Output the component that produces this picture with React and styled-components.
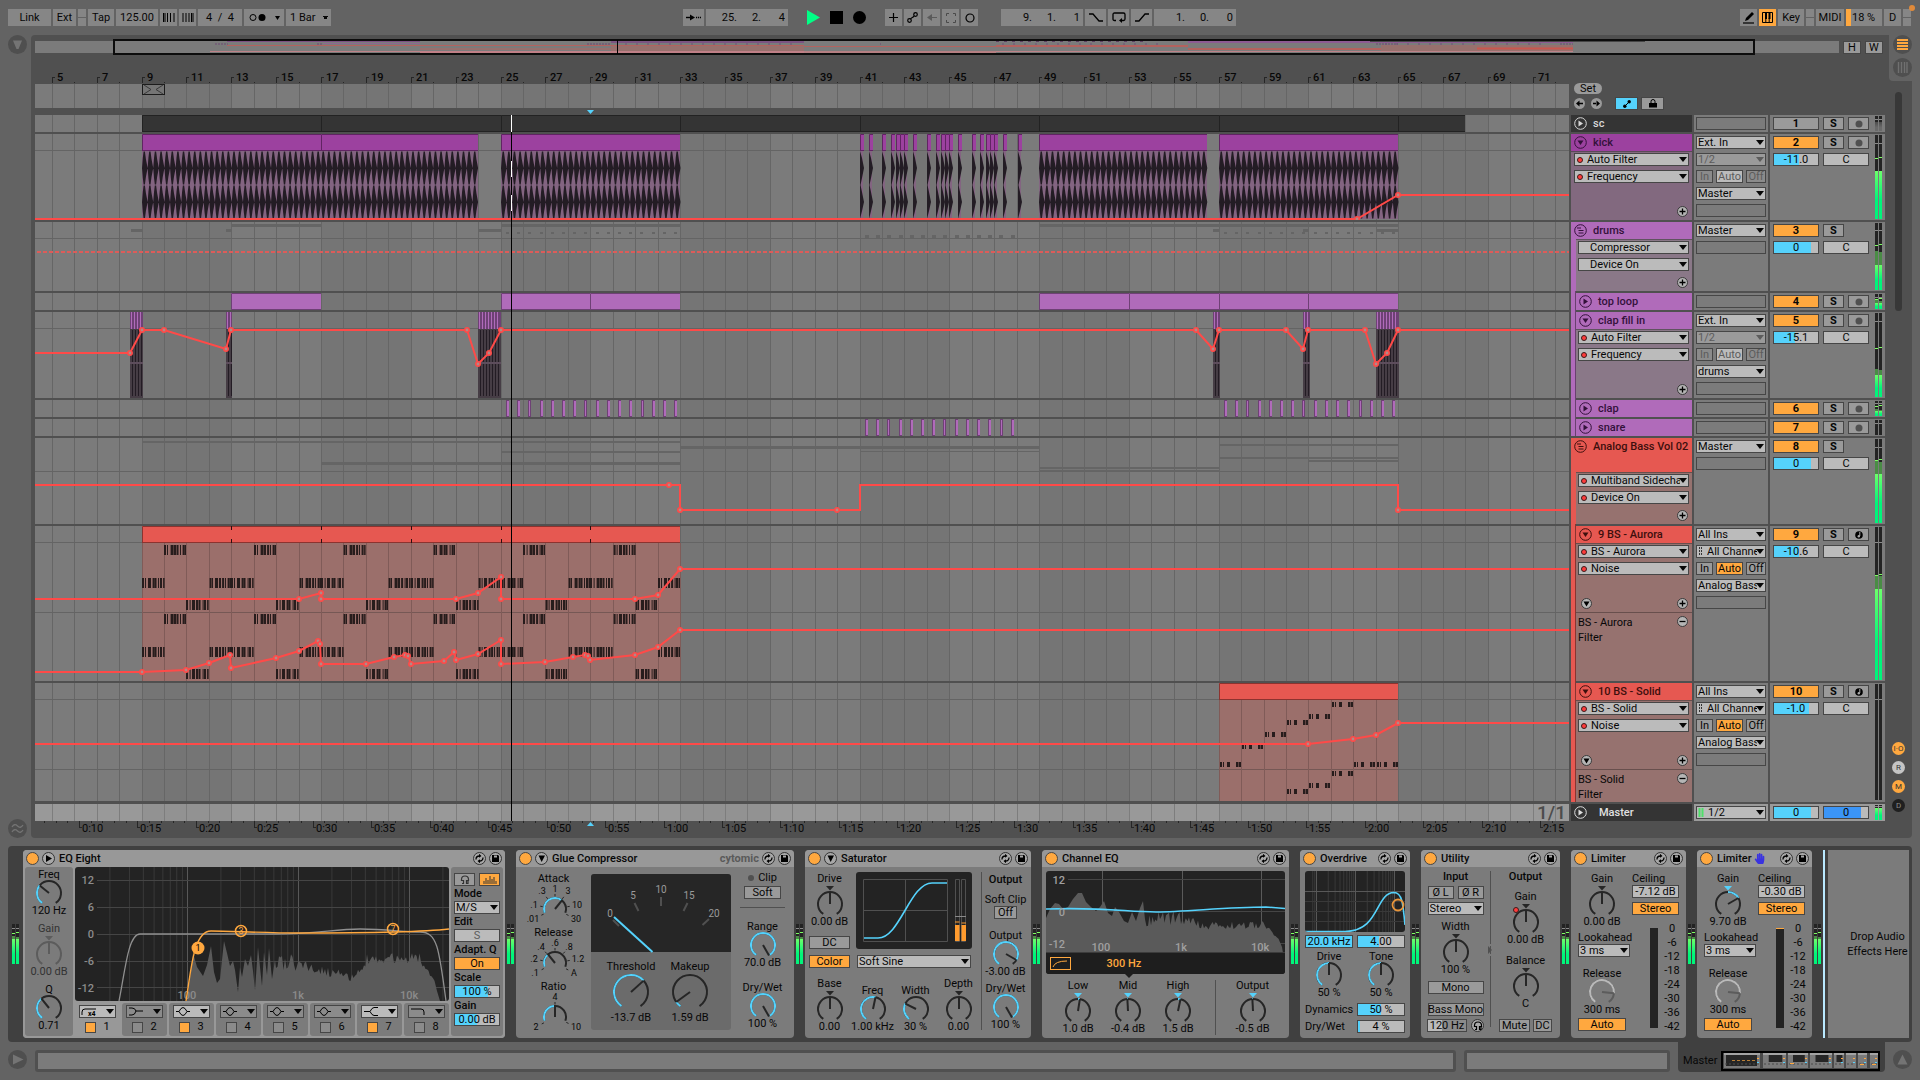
import React from "react";
import styled, { createGlobalStyle, css } from "styled-components";
import { FaHandPaper } from "react-icons/fa";

const GlobalStyle = createGlobalStyle`
  * {
    box-sizing: border-box;
  }
  body {
    margin: 0;
    background: #636363;
    color: #070707;
    font-family: Roboto, "Liberation Sans", sans-serif;
    font-size: 11px;
    line-height: 12px;
  }
  button, input, select {
    font: inherit;
    color: inherit;
    margin: 0;
    padding: 0;
    border-radius: 0;
  }
  svg {
    display: block;
    flex: none;
    overflow: visible;
  }
`;

const orange = "#ffa83f";
const blue = "#55d2fc";
const red = "#ff4a48";
const ink = "#262626";

/* ---------- shared parts ---------- */

const Page = styled.div`
  display: flex;
  flex-direction: column;
  min-height: 100vh;
  background: #636363;
`;

const Btn = styled.button`
  flex: none;
  display: flex;
  align-items: center;
  justify-content: center;
  width: ${(p) => (p.$w ? p.$w + "px" : "auto")};
  height: 13px;
  line-height: 11px;
  border: 1px solid #464646;
  background: ${(p) => p.$bg || "#9a9a9a"};
  color: ${(p) => p.$color || "#070707"};
  font-weight: ${(p) => (p.$bold ? 700 : 400)};
  white-space: nowrap;
`;

const ValueInput = styled.input`
  flex: none;
  width: ${(p) => p.$w}px;
  height: 13px;
  line-height: 11px;
  border: 1px solid #464646;
  text-align: center;
  background: linear-gradient(
    to right,
    ${(p) => p.$color || blue} ${(p) => p.$fill || 0}%,
    ${(p) => p.$base || "#bbbbbb"} ${(p) => p.$fill || 0}%
  );
`;

const SelectWrap = styled.span`
  position: relative;
  flex: none;
  display: flex;
  align-items: center;
  width: ${(p) => (p.$w ? p.$w + "px" : "auto")};
  height: 13px;
  border: 1px solid #464646;
  background: ${(p) => p.$bg || "#bbbbbb"};
  color: ${(p) => (p.$dim ? "#5c5c5c" : "#070707")};
  &::after {
    content: "";
    position: absolute;
    right: 1px;
    top: 3px;
    border: 4px solid transparent;
    border-top: 5px solid currentColor;
    border-bottom: 0;
    pointer-events: none;
  }
  select {
    appearance: none;
    flex: 1;
    min-width: 0;
    height: 11px;
    line-height: 11px;
    padding-left: ${(p) => p.$indent || 1}px;
    padding-right: 8px;
    border: 0;
    background: transparent;
  }
`;

const RedDot = styled.i`
  flex: none;
  width: 6px;
  height: 6px;
  margin: 0 1px 0 2px;
  border-radius: 50%;
  border: 1px solid #3a1a1a;
  background: #ff3b3b;
`;

function Select(props) {
  return (
    <SelectWrap $w={props.w} $bg={props.bg} $dim={props.dim} $indent={props.indent}>
      {props.children}
      <select aria-label={props.label || props.value}>
        <option>{props.value}</option>
      </select>
    </SelectWrap>
  );
}

const Circle = styled.button`
  flex: none;
  display: flex;
  align-items: center;
  justify-content: center;
  width: ${(p) => p.$d}px;
  height: ${(p) => p.$d}px;
  border-radius: 50%;
  border: ${(p) => (p.$line ? "1px solid " + p.$line : 0)};
  background: ${(p) => p.$bg || "transparent"};
  color: ${(p) => p.$color || "#070707"};
`;

const Empty = styled.div`
  width: 70px;
  height: 13px;
  border: 1px solid #464646;
`;

/* ---------- toolbar ---------- */

const ToolbarRow = styled.header`
  position: relative;
  display: grid;
  grid-template-columns: 1fr auto 1fr;
  height: 35px;
  padding: 9px 9px 9px 8px;
`;

const Group = styled.div`
  display: flex;
  align-items: center;
  gap: 2px;
  justify-content: ${(p) => (p.$end ? "flex-end" : "flex-start")};
`;

const ToolBtn = styled.button`
  display: flex;
  align-items: center;
  justify-content: center;
  gap: 6px;
  width: ${(p) => p.$w}px;
  height: 17px;
  border: 0;
  background: ${(p) => p.$bg || "#868686"};
`;

const ToolInput = styled.input`
  width: ${(p) => p.$w}px;
  height: 17px;
  border: 0;
  text-align: center;
  background: #868686;
`;

const Position = styled.div`
  display: flex;
  justify-content: flex-end;
  width: 82px;
  height: 17px;
  padding-right: 3px;
  background: #868686;
  input {
    width: 24px;
    border: 0;
    background: transparent;
    text-align: right;
  }
`;

const Led = styled.span`
  width: 8px;
  height: 17px;
  background: linear-gradient(#868686 8px, #636363 8px, #636363 9px, #868686 9px);
`;

const Gap = styled.span`
  width: ${(p) => p.$w}px;
`;

const ToolSelect = styled.select`
  appearance: none;
  width: 45px;
  height: 17px;
  padding-left: 4px;
  border: 0;
  background: linear-gradient(#070707, #070707) 37px 7px / 5px 1px no-repeat,
    linear-gradient(#070707, #070707) 38px 8px / 3px 2px no-repeat, #868686;
`;

const CpuLoad = styled.span`
  width: 36px;
  height: 17px;
  padding-left: 6px;
  line-height: 18px;
  background: linear-gradient(to right, ${orange} 5px, #868686 5px);
`;

const AlertDot = styled.i`
  position: absolute;
  right: 5px;
  top: 5px;
  width: 6px;
  height: 6px;
  border-radius: 50%;
  background: #e08a3a;
`;

function BeatPosition(props) {
  return (
    <Position>
      {props.parts.map((part, i) => (
        <input key={i} aria-label={props.label + " " + (i + 1)} defaultValue={part} />
      ))}
    </Position>
  );
}

function NudgeIcon(props) {
  const xs = props.up ? [1, 4, 7, 9.5, 11] : [0.5, 2, 4.5, 7.5, 11];
  return (
    <svg width="12" height="9" viewBox="0 0 12 9">
      {xs.map((x) => (
        <path key={x} d={`M${x} 0V9`} stroke="#000" strokeWidth="1" />
      ))}
    </svg>
  );
}

function Toolbar() {
  return (
    <ToolbarRow>
      <Group>
        <ToolBtn $w={43}>Link</ToolBtn>
        <ToolBtn $w={23}>Ext</ToolBtn>
        <Led />
        <ToolBtn $w={26}>Tap</ToolBtn>
        <ToolInput $w={42} aria-label="Tempo" defaultValue="125.00" />
        <ToolBtn $w={17} aria-label="Nudge down"><NudgeIcon /></ToolBtn>
        <ToolBtn $w={17} aria-label="Nudge up"><NudgeIcon up /></ToolBtn>
        <ToolInput $w={44} aria-label="Time signature" defaultValue="4  /  4" />
        <ToolBtn $w={40} aria-label="Metronome">
          <svg width="32" height="9" viewBox="0 0 32 9">
            <circle cx="5" cy="4.5" r="3" fill="none" stroke="#000" />
            <circle cx="14" cy="4.5" r="3.5" />
            <path d="M27 3h5l-2.5 4z" />
          </svg>
        </ToolBtn>
        <ToolSelect aria-label="Quantization"><option>1 Bar</option></ToolSelect>
      </Group>
      <Group>
        <ToolBtn $w={21} aria-label="Follow">
          <svg width="15" height="9" viewBox="0 0 15 9">
            <path d="M0 4.5h5" stroke="#000" strokeWidth="1.4" />
            <path d="M4 1.5l5 3-5 3z" />
            <path d="M10 4.5h5" stroke="#000" strokeWidth="1.4" strokeDasharray="1.2 .8" />
          </svg>
        </ToolBtn>
        <BeatPosition label="Song position" parts={["25.", "2.", "4"]} />
        <Gap $w={13} />
        <ToolBtn $w={16} $bg="transparent" aria-label="Play">
          <svg width="13" height="15" viewBox="0 0 13 15"><path d="M0 0l13 7.500L0 15z" fill="#00ff86" /></svg>
        </ToolBtn>
        <Gap $w={3} />
        <ToolBtn $w={16} $bg="transparent" aria-label="Stop">
          <svg width="13" height="13"><rect width="13" height="13" /></svg>
        </ToolBtn>
        <Gap $w={3} />
        <ToolBtn $w={16} $bg="transparent" aria-label="Record">
          <svg width="13" height="13"><circle cx="6.500" cy="6.500" r="6.500" /></svg>
        </ToolBtn>
        <Gap $w={14} />
        <ToolBtn $w={17} aria-label="Overdub">
          <svg width="9" height="9"><path d="M4.5 0v9M0 4.5h9" stroke="#000" strokeWidth="1.2" /></svg>
        </ToolBtn>
        <ToolBtn $w={17} aria-label="Automation arm">
          <svg width="11" height="11" fill="none" stroke="#000" strokeWidth="1.2">
            <circle cx="2.500" cy="8.500" r="1.800" />
            <circle cx="8.500" cy="2.500" r="1.800" />
            <path d="M3.500 7C5 5 6 6 7.300 3.800" />
          </svg>
        </ToolBtn>
        <ToolBtn $w={17} aria-label="Re-enable automation">
          <svg width="10" height="9" fill="#5a5a5a"><path d="M0 4.500L5 1v7z" /><rect x="4" y="4" width="6" height="1" /></svg>
        </ToolBtn>
        <ToolBtn $w={17} aria-label="Capture">
          <svg width="10" height="10" fill="none" stroke="#4a4a4a">
            <path d="M.500 3V.500H3M7 .500h2.500V3M9.500 7v2.500H7M3 9.500H.500V7" />
          </svg>
        </ToolBtn>
        <ToolBtn $w={17} aria-label="Session record">
          <svg width="10" height="10"><circle cx="5" cy="5" r="4" fill="none" stroke="#000" strokeWidth="1.2" /></svg>
        </ToolBtn>
        <Gap $w={19} />
        <BeatPosition label="Loop start" parts={["9.", "1.", "1"]} />
        <ToolBtn $w={21} aria-label="Punch in">
          <svg width="14" height="9"><path d="M0 1h4l6 7h4" fill="none" stroke="#000" strokeWidth="1.300" /></svg>
        </ToolBtn>
        <ToolBtn $w={21} aria-label="Loop">
          <svg width="14" height="11" fill="none" stroke="#000" strokeWidth="1.300">
            <path d="M4 8.500H2.500Q1 8.500 1 7V2.500Q1 1 2.500 1h9Q13 1 13 2.500V7q0 1.500-1.500 1.500H9" />
            <path d="M10 6L7 8.500l3 2.500z" fill="#000" stroke="none" />
          </svg>
        </ToolBtn>
        <ToolBtn $w={21} aria-label="Punch out">
          <svg width="14" height="9"><path d="M0 8h4l6-7h4" fill="none" stroke="#000" strokeWidth="1.300" /></svg>
        </ToolBtn>
        <BeatPosition label="Loop length" parts={["1.", "0.", "0"]} />
      </Group>
      <Group $end>
        <ToolBtn $w={17} aria-label="Draw mode">
          <svg width="12" height="12"><path d="M2 9l1-3 6-6 2 2-6 6z" /><path d="M0 11h11" stroke="#000" strokeWidth="1.200" /></svg>
        </ToolBtn>
        <ToolBtn $w={17} $bg={orange} aria-label="Computer keyboard">
          <svg width="11" height="11">
            <path d="M.500 .500h10v10H.500zM3.800 6v4.500M7.200 6v4.500" fill="none" stroke="#000" />
            <path d="M3 0h2v7H3zM6.500 0h2v7h-2z" />
          </svg>
        </ToolBtn>
        <ToolBtn $w={26}>Key</ToolBtn>
        <Led />
        <ToolBtn $w={28}>MIDI</ToolBtn>
        <CpuLoad>18 %</CpuLoad>
        <ToolBtn $w={17}>D</ToolBtn>
        <Led />
      </Group>
      <AlertDot />
    </ToolbarRow>
  );
}

/* ---------- arrangement data ---------- */

// lanes are drawn on a 1534 unit wide time axis
const LANE = 1534;
const barX = (bar) => Math.floor(107 + (bar - 9) * 22.44);
const noise = (i) => Math.abs(Math.sin(i * 12.9898) * 43758.5453) % 1;
const bars = Array.from({ length: 68 }, (_, i) => i + 5);

const LaneSvg = styled.svg`
  width: 100%;
  height: ${(p) => p.$h}px;
  overflow: hidden;
`;

function Grid(props) {
  return (
    <>
      <rect width={LANE} height={props.h} fill={props.light || "#7b7b7b"} />
      {bars
        .filter((b) => b % 8 === 1)
        .map((b) => (
          <rect key={b} x={barX(b)} width={barX(b + 4) - barX(b)} height={props.h} fill={props.dark || "#757575"} />
        ))}
      <GridLines h={props.h} color={props.line || "#666666"} />
      {(props.rules || []).map((y) => (
        <rect key={y} y={y} width={LANE} height="1" fill="#646464" />
      ))}
    </>
  );
}

function GridLines(props) {
  const from = props.from || 5;
  const to = props.to || 73;
  return bars
    .filter((b) => b >= from && b < to)
    .map((b) => <rect key={b} x={barX(b)} width="1" height={props.h} y={props.y || 0} fill={props.color} />);
}

function Clip(props) {
  const { x, w, h, fill, line } = props;
  return (
    <>
      <rect x={x} width={w} height={h} fill={fill} />
      <path d={`M${x + 0.5} ${h}V.5H${x + w}M${x} ${h - 0.5}H${x + w}`} fill="none" stroke={line} />
    </>
  );
}

function Automation(props) {
  const pts = props.points.map(([x, y]) => [x - 35, y]);
  return (
    <>
      <polyline points={pts.map((p) => p.join(",")).join(" ")} fill="none" stroke={red} strokeWidth="2" />
      {pts.slice(1, -1).map(([x, y], i) =>
        (props.skip || []).includes(i + 1) ? null : (
          <circle key={i} cx={x} cy={y} r="2.200" fill="#b08a88" stroke={red} strokeWidth="1.600" />
        )
      )}
    </>
  );
}

function KickWave(props) {
  let d = "";
  for (const cy of [34, 68]) {
    for (let x = props.x; x < props.x + props.w - 1; x += 5.61) {
      d += `M${x} ${cy}L${x + 0.8} ${cy - 10}L${x + 1.6} ${cy - 16.5}H${x + 2.9}L${x + 3.9} ${cy - 9}L${x + 5.6} ${cy}L${x + 3.9} ${cy + 9}L${x + 2.9} ${cy + 16.5}H${x + 1.6}L${x + 0.8} ${cy + 10}Z`;
    }
  }
  return (
    <>
      <rect x={props.x} y="17" width={props.w} height="68" fill="#836481" />
      <path d={d} fill="#231c24" />
      <path d={`M${props.x} 34.5h${props.w}M${props.x} 68.5h${props.w}`} stroke="#231c24" />
    </>
  );
}

const kickClips = [[9, 17], [17, 24], [25, 33], [49, 56.46], [57, 65]];
const kickHits = [540, 560, 594, 614, 628, 638, 648, 670, 704, 724, 738, 748, 758, 780, 814, 834, 848, 858, 868, 890, 925];

function ScLane() {
  return (
    <>
      <Grid h={17} />
      {[9, 17, 25, 33, 41, 49, 57, 65].map((b) => (
        <Clip key={b} x={barX(b)} w={barX(b === 65 ? 68 : b + 8) - barX(b)} h={17} fill="#343434" line="#222222" />
      ))}
    </>
  );
}

function KickLane() {
  return (
    <>
      <Grid h={86} rules={[16]} />
      {kickClips.map(([a, b]) => (
        <React.Fragment key={a}>
          <KickWave x={barX(a)} w={barX(b) - barX(a)} />
          <Clip x={barX(a)} w={barX(b) - barX(a)} h={17} fill="#9c419f" line="#612463" />
        </React.Fragment>
      ))}
      {kickHits.map((v) => {
        const x = Math.round(605 + v / 2.45);
        return (
          <React.Fragment key={v}>
            <rect x={x} y="17" width="3" height="68" fill="#836481" />
            <path d={`M${x} 17l2 7l2 10l-2 10l-1.500 7l1.500 7l2 10l-2 9l-2 8z`} fill="#231c24" />
            <Clip x={x} w={4} h={17} fill="#9c419f" line="#612463" />
          </React.Fragment>
        );
      })}
      <Automation points={[[35, 85], [1357, 85], [1398, 61], [1569, 61]]} />
    </>
  );
}

function DrumsLane() {
  const strips = [[131, 7, 12, 3], [226, 7, 6, 3], [478, 7, 23, 3], [1213, 7, 6, 3], [1303, 7, 6, 3], [1376, 7, 22, 3], [231, 2, 90, 3], [501, 2, 179, 3], [1039, 2, 359, 3]];
  for (let i = 0; i < 16; i++) {
    strips.push([Math.round(506 + i * 11.2), 10, 3, 2], [Math.round(1224 + i * 11.2), 10, 3, 2]);
  }
  for (let i = 0; i < 14; i++) {
    strips.push([Math.round(865 + i * 11.2), 13, 4, 3]);
  }
  return (
    <>
      <Grid h={69} rules={[16]} />
      {strips.map(([x, y, w, h], i) => (
        <rect key={i} x={x - 35} y={y} width={w} height={h} fill="#656565" />
      ))}
      <path d="M2 30H1534" stroke="#dd5c59" strokeWidth="2" strokeDasharray="4 2" />
    </>
  );
}

function TopLoopLane() {
  return (
    <>
      <Grid h={17} />
      {[13, 25, 29, 49, 53, 57, 61].map((b) => (
        <Clip key={b} x={barX(b)} w={barX(b + 4) - barX(b)} h={17} fill="#b06bba" line="#6e4175" />
      ))}
    </>
  );
}

function FillLane() {
  const fills = [[130, 13], [226, 6], [478, 23], [1213, 7], [1303, 7], [1376, 23]];
  return (
    <>
      <Grid h={86} rules={[16]} />
      {fills.map(([x, w]) => (
        <React.Fragment key={x}>
          <rect x={x - 35} width={w} height="17" fill="#6e4175" />
          <rect x={x - 35} y="17" width={w} height="69" fill="#463d45" />
          {Array.from({ length: Math.floor(w / 3) }, (_, i) => (
            <React.Fragment key={i}>
              <rect x={x - 34 + i * 3} width="1" height="17" fill="#b06bba" />
              <rect x={x - 33 + i * 3} y="18" width="1" height="66" fill="#231c24" />
            </React.Fragment>
          ))}
          <rect x={x - 35} y="50" width={w} height="2" fill="#5d4d5c" />
        </React.Fragment>
      ))}
      <Automation
        points={[
          [35, 41], [130, 41], [142, 18], [164, 18], [226, 37], [231, 18], [467, 18], [478, 52], [489, 41], [501, 18],
          [1196, 18], [1213, 37], [1219, 18], [1286, 18], [1303, 37], [1308, 18], [1365, 18], [1376, 52], [1387, 41], [1398, 18], [1569, 18],
        ]}
      />
    </>
  );
}

function HitsLane(props) {
  return (
    <>
      <Grid h={17} />
      {props.starts.map((start) =>
        Array.from({ length: props.count }, (_, i) => {
          const x = Math.round(start - 35 + i * 11.21);
          return (
            <React.Fragment key={start + i}>
              <rect x={x} width="3" height="17" fill="#6e4175" />
              <rect x={x + 1} y="1" width={i % 5 === 2 ? 1 : 2} height="15" fill="#b06bba" />
            </React.Fragment>
          );
        })
      )}
    </>
  );
}

function BassGroupLane() {
  const strips = [[9, 33, 3, 2], [25, 33, 13, 2], [17, 33, 24, 3], [33, 49, 8, 3], [41, 49, 13, 1], [49, 57, 29, 2], [49, 57, 32, 1], [57, 65, 6, 2], [57, 65, 19, 2], [61, 65, 22, 2]];
  return (
    <>
      <Grid h={86} rules={[33]} />
      {strips.map(([a, b, y, h], i) => (
        <rect key={i} x={barX(a)} y={y} width={barX(b) - barX(a)} height={h} fill="#656565" />
      ))}
      <Automation
        skip={[2, 5, 6, 7]}
        points={[[35, 47], [669, 47], [680, 47], [680, 72], [837, 72], [860, 72], [860, 47], [1398, 47], [1398, 72], [1569, 72]]}
      />
    </>
  );
}

const stripes = [[0, 2], [3, 1], [6, 3], [10, 2], [12.5, 2], [16, 1], [18, 2], [20.5, 1.5]];

function Notes(props) {
  return stripes.map(([dx, w], i) => (
    <rect key={i} x={barX(props.bar) + dx + (noise(props.bar + i) > 0.6 ? 0.6 : 0)} y={props.y} width={w} height="10" fill="#271c1c" />
  ));
}

function AuroraLane() {
  const x = barX(9);
  const w = barX(33) - x;
  const rows = { 0: 52, 1: 19, 2: 74, 3: 52 };
  return (
    <>
      <Grid h={155} rules={[16, 86]} />
      <rect x={x} y="17" width={w} height="138" fill="#9b6f6b" />
      <rect x={x} y="86" width={w} height="1" fill="#765855" />
      <GridLines h={138} y={17} from={9} to={34} color="#805b58" />
      <Clip x={x} w={w} h={17} fill="#e65851" line="#8c332f" />
      {[13, 17, 21, 25, 29].map((b) => (
        <path key={b} d={`M${barX(b) + 0.5} 0v4M${barX(b) + 0.5} 13v4`} stroke="#2a1010" />
      ))}
      {bars
        .filter((b) => b >= 9 && b < 33)
        .map((b) => (
          <React.Fragment key={b}>
            <Notes bar={b} y={rows[(b - 9) % 4]} />
            <Notes bar={b} y={rows[(b - 9) % 4] + 69} />
          </React.Fragment>
        ))}
      <Automation
        points={[[35, 73], [299, 73], [321, 67], [321, 73], [456, 73], [478, 67], [501, 51], [501, 73], [635, 73], [658, 69], [680, 43], [1569, 43]]}
      />
      <Automation
        points={[
          [35, 146], [142, 146], [186, 144], [209, 137], [230, 129], [231, 142], [276, 132], [299, 125], [318, 115], [320, 118], [321, 138],
          [366, 138], [394, 131], [405, 129], [408, 130], [411, 138], [444, 135], [454, 126], [456, 134], [478, 128], [501, 114], [501, 138],
          [545, 136], [573, 131], [585, 129], [588, 130], [590, 134], [635, 129], [658, 121], [680, 104], [1569, 104],
        ]}
      />
    </>
  );
}

function SolidLane() {
  const x = barX(57);
  const w = barX(65) - x;
  const notes = [[57, 79], [58, 61], [59, 49], [60, 37], [61, 31], [62, 19], [63, 79], [64, 79], [60, 106], [61, 100], [62, 88]];
  return (
    <>
      <Grid h={118} rules={[16, 86]} />
      <rect x={x} y="17" width={w} height="101" fill="#9b6f6b" />
      <rect x={x} y="86" width={w} height="1" fill="#765855" />
      <GridLines h={101} y={17} from={57} to={65} color="#805b58" />
      <Clip x={x} w={w} h={17} fill="#e65851" line="#8c332f" />
      {notes.map(([b, y]) =>
        [[1, 2], [4, 1], [8, 3], [17, 2], [19.500, 2.500]].map(([dx, nw]) => (
          <rect key={b + "-" + y + dx} x={barX(b) + dx} y={y} width={nw} height="5" fill="#271c1c" />
        ))
      )}
      <Automation points={[[35, 61], [1308, 61], [1353, 56], [1376, 52], [1398, 40], [1569, 40]]} />
    </>
  );
}

function MasterLane() {
  return <Grid h={17} light="#999999" dark="#929292" line="#7d7d7d" />;
}

/* ---------- tracks ---------- */

const TrackRow = styled.div`
  display: grid;
  grid-template-columns: minmax(0, 1fr) 121px 74px 115px;
  column-gap: 2px;
  height: ${(p) => p.$h}px;
`;

const Head = styled.div`
  display: flex;
  min-width: 0;
`;

const GroupStrip = styled.i`
  flex: none;
  width: 5px;
  margin-top: -2px;
  background: ${(p) => p.$color};
  border-right: 1px solid rgba(0, 0, 0, 0.4);
`;

const HeadMain = styled.div`
  flex: 1;
  display: flex;
  flex-direction: column;
  min-width: 0;
  background: ${(p) => p.$bg};
  overflow: hidden;
`;

const NameRow = styled.div`
  flex: none;
  display: flex;
  align-items: center;
  gap: 6px;
  height: ${(p) => (p.$tall ? 34 : 17)}px;
  padding-left: 3px;
  padding-bottom: ${(p) => (p.$tall ? 17 : 0)}px;
  background: ${(p) => p.$bg};
  color: ${(p) => p.$color};
  font-weight: 500;
  white-space: nowrap;
`;

const HeadBody = styled.div`
  position: relative;
  flex: none;
  display: flex;
  flex-direction: column;
  gap: 4px;
  height: ${(p) => p.$h}px;
  margin-left: ${(p) => (p.$inset ? 5 : 0)}px;
  padding: 1px 3px 0 ${(p) => (p.$child ? 2 : 3)}px;
  border-top: 1px solid rgba(0, 0, 0, 0.3);
  background: ${(p) => p.$bg};
`;

const BodyIcons = styled.div`
  display: flex;
  flex-direction: ${(p) => (p.$split ? "row" : "row-reverse")};
  justify-content: ${(p) => (p.$split ? "space-between" : "flex-start")};
  margin-top: auto;
  padding: 0 1px 3px 3px;
`;

const SubLane = styled.div`
  flex: none;
  display: flex;
  justify-content: space-between;
  padding: 2px 4px 0 2px;
  border-top: 1px solid rgba(0, 0, 0, 0.3);
  line-height: 15px;
  p {
    margin: 0;
  }
  button {
    margin-top: 1px;
  }
`;

const StripLine = styled.div`
  display: flex;
  gap: 3px;
`;

const IoCell = styled.div`
  display: flex;
  flex-direction: column;
  gap: 4px;
  padding: 2px;
  background: ${(p) => p.$bg || "#7b7b7b"};
  overflow: hidden;
`;

const MixCell = styled.div`
  display: flex;
  justify-content: space-between;
  padding: 1px 3px;
  background: ${(p) => p.$bg || "#7b7b7b"};
  overflow: hidden;
`;

const MixControls = styled.div`
  display: flex;
  flex-direction: column;
  gap: 4px;
  padding-top: 1px;
  ${StripLine} {
    gap: 4px;
  }
`;

function FoldIcon(props) {
  const shapes = {
    play: <path d="M4.500 3.500l4.500 3-4.500 3z" fill={props.color} />,
    down: <path d="M3.500 4.500h6l-3 4.500z" fill={props.color} />,
    group: <path d="M3 4h4M4.500 6.500h5M4.500 9h5" stroke={props.color} />,
  };
  return (
    <svg width="13" height="13">
      <circle cx="6.500" cy="6.500" r="5.800" fill="none" stroke={props.color} />
      {shapes[props.kind]}
    </svg>
  );
}

function SmallIcon(props) {
  const d = { plus: "M2.500 5.500h6M5.500 2.500v6", minus: "M2.500 5.500h6" }[props.kind];
  return (
    <Circle $d={11} $bg="#b5b5b5" $line="#3a3a3a" aria-label={props.kind}>
      <svg width="11" height="11">
        {d ? <path d={d} stroke="#000" strokeWidth="1.300" /> : <path d="M2.500 3.500h6l-3 5z" />}
      </svg>
    </Circle>
  );
}

function Meter(props) {
  const { h, level = h, mid = level, peak, tick, idle } = props;
  const id = "lv" + h + "_" + level + (idle ? "i" : "");
  return (
    <svg width="7" height={h}>
      <defs>
        <linearGradient id={id} x1="0" y1="0" x2="0" y2="1">
          <stop offset="0" stopColor={idle ? "#4c4c4c" : "#6dff6b"} />
          <stop offset=".6" stopColor={idle ? "#6a6a6a" : "#00f57a"} />
        </linearGradient>
      </defs>
      {[0, 4].map((x, i) => (
        <React.Fragment key={x}>
          <rect x={x} width="3" height={h} fill="#232323" />
          <rect x={x} y={mid + i} width="3" height={Math.max(0, h - mid - i)} fill="#4a8c46" />
          <rect x={x} y={level} width="3" height={Math.max(0, h - level)} fill={`url(#${id})`} />
          {peak !== undefined && <rect x={x} y={peak - i} width="3" height="1" fill="#7dff62" />}
          {tick !== undefined && <rect x={x} y={tick} width="3" height="1" fill="#8a8a8a" />}
        </React.Fragment>
      ))}
    </svg>
  );
}

const ArmIcon = () => (
  <svg width="8" height="8"><circle cx="4" cy="4" r="3.500" fill="#505050" /></svg>
);
const MidiArmIcon = () => (
  <svg width="8" height="8">
    <circle cx="4" cy="4" r="3.800" />
    <path d="M4.800 1v4" fill="none" stroke="#aaaaaa" />
    <circle cx="3.800" cy="5.200" r="1.200" fill="#aaaaaa" />
  </svg>
);

const purple = "#b06bba";
const bass = "#e65851";
const purpleBody = "#8a7888";
const bassBody = "#96726f";

const tracks = [
  { n: 1, name: "sc", h: 17, lane: ScLane, kind: "play", bg: "#343434", fg: "#d8d8d8", io: [null], off: true, arm: "audio", meter: { h: 15, level: 6, idle: true, tick: 3 } },
  { n: 2, name: "kick", h: 86, lane: KickLane, kind: "down", bg: "#9c419f", fg: "#33113a", body: "#82697f", params: ["Auto Filter", "Frequency"], io: ["Ext. In", "1/2", "off", "Master", null], gain: "-11.0", fill: 56, arm: "audio", meter: { h: 84, level: 36, peak: 23, tick: 8 } },
  { n: 3, name: "drums", h: 69, lane: DrumsLane, kind: "group", bg: purple, fg: "#33113a", body: purpleBody, inset: true, noDot: true, params: ["Compressor", "Device On"], io: ["Master", null], gain: "0", fill: 83, meter: { h: 67, level: 42, mid: 28, peak: 22, tick: 7 } },
  { n: 4, name: "top loop", h: 17, lane: TopLoopLane, kind: "play", bg: purple, fg: "#33113a", strip: purple, io: [null], arm: "audio", meter: { h: 15, level: 9, mid: 6, peak: 5, tick: 3 } },
  { n: 5, name: "clap fill in", h: 86, lane: FillLane, kind: "down", bg: purple, fg: "#33113a", body: purpleBody, strip: purple, params: ["Auto Filter", "Frequency"], io: ["Ext. In", "1/2", "off", "drums", null], gain: "-15.1", fill: 48, arm: "audio", meter: { h: 84, level: 62, mid: 56, peak: 35, tick: 8 } },
  { n: 6, name: "clap", h: 17, lane: () => <HitsLane starts={[506, 1224]} count={16} />, kind: "play", bg: purple, fg: "#33113a", strip: purple, io: [null], arm: "audio", meter: { h: 15, level: 10, mid: 8, peak: 5, tick: 2 } },
  { n: 7, name: "snare", h: 17, lane: () => <HitsLane starts={[865]} count={14} />, kind: "play", bg: purple, fg: "#33113a", strip: purple, io: [null], arm: "audio", meter: { h: 15, tick: 3 } },
  { n: 8, name: "Analog Bass Vol 02", h: 86, lane: BassGroupLane, kind: "group", bg: bass, fg: "#3d0f0d", body: bassBody, inset: true, tall: true, params: ["Multiband Sidechain", "Device On"], io: ["Master", null], gain: "0", fill: 83, meter: { h: 84, level: 35, mid: 22, peak: 21, tick: 8 } },
  { n: 9, name: "9 BS - Aurora", h: 155, lane: AuroraLane, kind: "down", bg: bass, fg: "#3d0f0d", body: bassBody, strip: bass, params: ["BS - Aurora", "Noise"], sub: ["BS - Aurora", "Filter"], io: ["All Ins", "All Channels", "on", "Analog Bass", null], gain: "-10.6", fill: 56, arm: "midi", meter: { h: 153, level: 62, mid: 48, peak: 48, tick: 15 } },
  { n: 10, name: "10 BS - Solid", h: 118, lane: SolidLane, kind: "down", bg: bass, fg: "#3d0f0d", body: bassBody, strip: bass, params: ["BS - Solid", "Noise"], sub: ["BS - Solid", "Filter"], io: ["All Ins", "All Channels", "on", "Analog Bass", null], gain: "-1.0", fill: 80, arm: "midi", meter: { h: 116, tick: 15 } },
];

function TrackHead(props) {
  const t = props.track;
  const bodyH = (t.sub ? 86 : t.h) - (t.tall ? 34 : 17);
  return (
    <Head>
      {t.strip && <GroupStrip $color={t.strip} />}
      <HeadMain $bg={t.inset ? t.bg : t.body || t.bg}>
        <NameRow $bg={t.bg} $color={t.fg} $tall={t.tall}>
          <FoldIcon kind={t.kind} color={t.fg} />
          {t.name}
        </NameRow>
        {t.params && (
          <HeadBody $h={bodyH} $inset={t.inset} $child={t.inset || t.strip} $bg={t.body}>
            {t.params.map((p) => (
              <Select key={p} value={p} indent={t.noDot ? 11 : 3}>
                {!t.noDot && <RedDot />}
              </Select>
            ))}
            <BodyIcons $split={Boolean(t.sub)}>
              {t.sub && <SmallIcon kind="fold" />}
              <SmallIcon kind="plus" />
            </BodyIcons>
          </HeadBody>
        )}
        {t.sub && (
          <SubLane>
            <div>
              <p>{t.sub[0]}</p>
              <p>{t.sub[1]}</p>
            </div>
            <SmallIcon kind="minus" />
          </SubLane>
        )}
      </HeadMain>
    </Head>
  );
}

function TrackIo(props) {
  return (
    <IoCell>
      {props.items.map((item, i) => {
        if (item === null) return <Empty key={i} />;
        if (item === "off" || item === "on") {
          const on = item === "on";
          const color = on ? "#070707" : "#5c5c5c";
          return (
            <StripLine key={i}>
              <Btn $w={17} $bg={on ? "#9a9a9a" : "#8b8b8b"} $color={color}>In</Btn>
              <Btn $w={27} $bg={on ? orange : "#bbbbbb"} $color={color}>Auto</Btn>
              <Btn $w={20} $bg={on ? "#9a9a9a" : "#8b8b8b"} $color={color}>Off</Btn>
            </StripLine>
          );
        }
        if (item === "All Channels") {
          return (
            <Select key={i} w={70} value={item} indent={4}>
              <svg width="6" height="9"><path d="M2.500 0v9M4.500 0v9" stroke="#333" strokeDasharray="2 1" /></svg>
            </Select>
          );
        }
        return <Select key={i} w={70} value={item} dim={item === "1/2"} bg={item === "1/2" ? "#9a9a9a" : undefined} />;
      })}
    </IoCell>
  );
}

function Track(props) {
  const t = props.track;
  const Lane = t.lane;
  return (
    <TrackRow $h={t.h}>
      <LaneSvg $h={t.h} viewBox={`0 0 ${LANE} ${t.h}`} preserveAspectRatio="none">
        <Lane />
      </LaneSvg>
      <TrackHead track={t} />
      <TrackIo items={t.io} />
      <MixCell>
        <MixControls>
          <StripLine>
            <Btn $w={46} $bold $bg={t.off ? undefined : orange}>{t.n}</Btn>
            <Btn $w={21} $bold>S</Btn>
            {t.arm && (
              <Btn $w={21} aria-label="Arm">{t.arm === "midi" ? <MidiArmIcon /> : <ArmIcon />}</Btn>
            )}
          </StripLine>
          {t.gain && (
            <StripLine>
              <ValueInput $w={46} $fill={t.fill} aria-label={t.name + " volume"} defaultValue={t.gain} />
              <ValueInput $w={46} aria-label={t.name + " pan"} defaultValue="C" />
            </StripLine>
          )}
        </MixControls>
        <Meter {...t.meter} />
      </MixCell>
    </TrackRow>
  );
}

/* ---------- arrangement ---------- */

const Arrange = styled.section`
  display: grid;
  grid-template-columns: 31px minmax(0, 1fr);
  padding-right: 8px;
`;

const EdgeColumn = styled.div`
  display: flex;
  flex-direction: column;
  justify-content: space-between;
  padding-left: 8px;
`;

const Panel = styled.div`
  position: relative;
  display: grid;
  grid-template-columns: minmax(0, 1fr) 27px;
  padding: 4px 0 0 4px;
  border-radius: 4px;
  background: #505050;
`;

const ViewButtons = styled.div`
  position: absolute;
  top: 0;
  right: -8px;
  display: flex;
  flex-direction: column;
  gap: 4px;
  width: 31px;
  height: 46px;
  padding-left: 4px;
  background: #636363;
  border-bottom-left-radius: 4px;
`;

const OverviewRow = styled.div`
  display: grid;
  grid-template-columns: minmax(0, 1fr) 18px 18px;
  column-gap: 4px;
  align-items: center;
  height: 16px;
  padding-right: 2px;
`;

const OverviewSvg = styled.svg`
  width: 100%;
  height: 16px;
`;

const TopArea = styled.div`
  display: grid;
  grid-template-columns: minmax(0, 1fr) 314px;
  column-gap: 2px;
  height: 60px;
`;

const BarRuler = styled.div`
  position: relative;
  height: 29px;
  font-weight: 500;
`;

const Tick = styled.span`
  position: absolute;
  top: 22px;
  height: 6px;
  padding-left: 4px;
  line-height: 1px;
  border-left: 1px solid #262626;
  &::before {
    content: "";
    position: absolute;
    left: 0;
    top: 0;
    width: 2px;
    border-top: 1px solid #262626;
  }
`;

const HalfTick = styled.i`
  position: absolute;
  top: 27px;
  width: 1px;
  height: 1px;
  background: #262626;
`;

const SetArea = styled.div`
  padding: 28px 0 0 3px;
`;

const SetButton = styled.button`
  display: block;
  width: 28px;
  height: 11px;
  margin-bottom: 3px;
  line-height: 11px;
  border: 0;
  border-radius: 6px;
  background: #9a9a9a;
`;

const SetLine = styled.div`
  display: flex;
  gap: 13px;
  align-items: center;
`;

const Tracks = styled.div`
  position: relative;
  display: flex;
  flex-direction: column;
  gap: 2px;
`;

const Playhead = styled.i`
  position: absolute;
  top: 0;
  bottom: 0;
  width: 1px;
  background: linear-gradient(#fff 17px, #000 17px, #000 46px, #fff 46px, #fff 62px, #000 62px, #000 80px, #fff 80px, #fff 96px, #000 96px);
`;

const PlayheadArea = styled.div`
  position: absolute;
  inset: 0 316px 0 0;
  pointer-events: none;
`;

const MasterRow = styled(TrackRow)`
  margin-top: 1px;
`;

const MasterCell = styled.div`
  position: relative;
`;

const ZoomLabel = styled.span`
  position: absolute;
  right: 3px;
  top: 0;
  font-size: 19px;
  line-height: 17px;
  font-weight: 500;
  color: #4c4c4c;
`;

const TimeRuler = styled.div`
  position: relative;
  height: 17px;
  margin-right: 316px;
`;

const TimeTick = styled.span`
  position: absolute;
  top: 0;
  height: 7px;
  padding-left: 2px;
  line-height: 15px;
  border-left: 1px solid #262626;
  white-space: nowrap;
  &::before {
    content: "";
    position: absolute;
    left: 0;
    bottom: 0;
    width: 2px;
    border-top: 1px solid #262626;
  }
`;

const SecondTick = styled.i`
  position: absolute;
  top: 0;
  width: 1px;
  height: 2px;
  background: #262626;
`;

const SideColumn = styled.div`
  display: flex;
  flex-direction: column;
  align-items: center;
  gap: 6px;
  padding: 53px 0 26px;
`;

const ScrollThumb = styled.div`
  width: 7px;
  height: 219px;
  margin-bottom: auto;
  border-radius: 4px;
  background: #383838;
`;

const LayerButton = styled.button`
  width: 13px;
  height: 13px;
  border: 0;
  border-radius: 50%;
  background: ${(p) => p.$bg};
  color: ${(p) => p.$color || "#333333"};
  font-size: 8px;
  line-height: 13px;
`;

const pct = (x) => ((x - 35) / LANE) * 100 + "%";

function Overview() {
  return (
    <OverviewSvg viewBox="35 0 1804 16" preserveAspectRatio="none">
      <rect x="35" y="2" width="1804" height="12" fill="#7b7b7b" />
      <rect x="227" y="2" width="193" height="1" fill="#7c4f82" />
      <rect x="323" y="4" width="97" height="1" fill="#8d6792" />
      <path d="M215 5h13M317 5h6M587 5h24M880 5h1M1376 5h22M1560 5h13" stroke="#6e4a74" strokeDasharray="2 1" />
      <rect x="611" y="2" width="193" height="2" fill="#7c5382" />
      <path d="M1002 5h160M1385 5h160" stroke="#70507a" strokeDasharray="2 9" />
      <path d="M996 2.500h150" stroke="#5c3f60" strokeDasharray="3 5" />
      <rect x="1188" y="2" width="385" height="2" fill="#8d5b93" />
      <rect x="1370" y="2" width="275" height="1" fill="#454545" />
      <path d="M227 6.500h385M804 7.500h192" stroke="#b3625e" />
      <rect x="420" y="9" width="191" height="2" fill="#97706d" />
      <rect x="611" y="6" width="193" height="7" fill="#97706d" />
      <path d="M611 6.500h193" stroke="#b3625e" />
      <path d="M625 5h175" stroke="#70507a" strokeDasharray="2 9" />
      <rect x="996" y="6" width="192" height="2" fill="#b3625e" />
      <rect x="1188" y="9" width="193" height="2" fill="#b3625e" />
      <rect x="1381" y="6" width="192" height="7" fill="#97706d" />
      <path d="M1477 9.500h96" stroke="#c9564f" strokeWidth="2" />
      <path d="M210 12.500h210M804 12.500h769" stroke="#bd8287" />
      <path d="M420 13h191M611 13h193" stroke="#c08087" strokeWidth="2" />
      <rect x="804" y="12" width="192" height="2" fill="#b57f82" />
      <rect x="114" y="1" width="1640" height="14" fill="none" stroke="#0c0c0c" strokeWidth="2" />
      <rect x="617" y="1" width="1" height="14" />
    </OverviewSvg>
  );
}

function Arrangement() {
  const seconds = Array.from({ length: 130 }, (_, i) => i + 7);
  return (
    <Arrange>
      <EdgeColumn>
        <Circle $d={19} $bg="#4f4f4f" aria-label="Browser">
          <svg width="19" height="19"><path d="M5 5.500h9l-3.500 8.500h-2z" fill="#747474" /></svg>
        </Circle>
        <Circle $d={19} $bg="#4f4f4f" aria-label="Groove pool">
          <svg width="19" height="19" fill="none" stroke="#747474" strokeWidth="1.300">
            <path d="M4 8q2.500-4 5.500-1t5.500-1M4 13q2.500-4 5.500-1t5.500-1" />
          </svg>
        </Circle>
      </EdgeColumn>
      <Panel>
        <div>
          <OverviewRow>
            <Overview />
            <Btn $w={18}>H</Btn>
            <Btn $w={18}>W</Btn>
          </OverviewRow>
          <TopArea>
            <div>
              <BarRuler>
                {bars.map((b) =>
                  b % 2 ? (
                    <Tick key={b} style={{ left: pct(barX(b) + 35) }}>{b}</Tick>
                  ) : (
                    <HalfTick key={b} style={{ left: pct(barX(b) + 35) }} />
                  )
                )}
              </BarRuler>
              <LaneSvg $h={31} viewBox={`0 0 ${LANE} 31`} preserveAspectRatio="none">
                <Grid h={24} />
                <rect y="24" width={LANE} height="7" fill="#505050" />
                <rect x="107.500" y=".500" width="22" height="10" fill="none" stroke="#1c1c1c" />
                <path d="M109 1l7 4.500l-7 4.500M128 1l-7 4.500l7 4.500" fill="none" stroke="#3a3a3a" />
                <path d="M552 26h7l-3.500 4z" fill={blue} />
              </LaneSvg>
            </div>
            <SetArea>
              <SetButton>Set</SetButton>
              <SetLine>
                <Group>
                  <Circle $d={11} $bg="#9a9a9a" aria-label="Previous locator">
                    <svg width="11" height="11"><path d="M2 5.500l3.500-3v6zM5 4.800h4v1.400H5z" /></svg>
                  </Circle>
                  <Gap $w={2} />
                  <Circle $d={11} $bg="#9a9a9a" aria-label="Next locator">
                    <svg width="11" height="11"><path d="M9 5.500l-3.500-3v6zM2 4.800h4v1.400H2z" /></svg>
                  </Circle>
                </Group>
                <StripLine>
                  <Btn $w={23} $bg={blue} aria-label="Automation mode">
                    <svg width="8" height="8"><path d="M1.500 6.500l5-5" stroke="#000" /><circle cx="1.800" cy="6.200" r="1.700" /><circle cx="6.200" cy="1.800" r="1.700" /></svg>
                  </Btn>
                  <Btn $w={23} aria-label="Lock envelopes">
                    <svg width="8" height="9"><path d="M0 4h8v4.500H0z" /><path d="M2 4V2.500q0-2 2-2t2 2V4" fill="none" stroke="#000" /></svg>
                  </Btn>
                </StripLine>
              </SetLine>
            </SetArea>
          </TopArea>
          <Tracks>
            {tracks.map((t) => (
              <Track key={t.n} track={t} />
            ))}
            <MasterRow $h={17}>
              <MasterCell>
                <LaneSvg $h={17} viewBox={`0 0 ${LANE} 17`} preserveAspectRatio="none">
                  <MasterLane />
                </LaneSvg>
                <ZoomLabel>1/1</ZoomLabel>
              </MasterCell>
              <Head>
                <HeadMain $bg="#343434">
                  <NameRow $bg="#343434" $color="#e0e0e0">
                    <FoldIcon kind="play" color="#e0e0e0" />
                    <Gap $w={0} />
                    Master
                  </NameRow>
                </HeadMain>
              </Head>
              <IoCell $bg="#9a9a9a">
                <Select w={70} value="1/2" label="Master output" indent={4}>
                  <svg width="7" height="9"><path d="M2.500 0v9M5.500 0v9" stroke="#4fe06a" strokeWidth="2" /></svg>
                </Select>
              </IoCell>
              <MixCell $bg="#9a9a9a">
                <MixControls>
                  <StripLine>
                    <ValueInput $w={46} $fill={83} aria-label="Master volume" defaultValue="0" />
                    <ValueInput $w={46} $fill={83} $color="#3b95f7" aria-label="Cue volume" defaultValue="0" />
                  </StripLine>
                </MixControls>
                <Meter h={15} level={3} tick={1} />
              </MixCell>
            </MasterRow>
            <PlayheadArea>
              <Playhead style={{ left: pct(511) }} />
            </PlayheadArea>
          </Tracks>
          <TimeRuler>
            {seconds.map((s) => {
              const left = pct(Math.round(79 + (s - 10) * 11.69));
              return s % 5 ? (
                <SecondTick key={s} style={{ left }} />
              ) : (
                <TimeTick key={s} style={{ left }}>
                  {Math.floor(s / 60)}:{String(s % 60).padStart(2, "0")}
                </TimeTick>
              );
            })}
            <LaneSvg $h={8} viewBox={`0 0 ${LANE} 8`} preserveAspectRatio="none">
              <path d="M552 5h7l-3.500-4z" fill={blue} />
            </LaneSvg>
          </TimeRuler>
        </div>
        <SideColumn>
          <ScrollThumb />
          <LayerButton $bg={orange}>I·O</LayerButton>
          <LayerButton $bg="#c4c4c4">R</LayerButton>
          <LayerButton $bg={orange}>M</LayerButton>
          <LayerButton $bg="#1f1f1f" $color="#8a8a8a">D</LayerButton>
        </SideColumn>
        <ViewButtons>
          <Circle $d={19} $bg="#4f4f4f" aria-label="Arrangement view">
            <svg width="19" height="19"><path d="M4 5h11M4 8h11M4 11h11M4 14h11" stroke={orange} strokeWidth="2" /></svg>
          </Circle>
          <Circle $d={19} $bg="#4f4f4f" aria-label="Session view">
            <svg width="19" height="19"><path d="M5.500 4v11M8.500 4v11M11.500 4v11M14 4v11" stroke="#707070" strokeWidth="1.400" /></svg>
          </Circle>
        </ViewButtons>
      </Panel>
    </Arrange>
  );
}

/* ---------- device parts ---------- */

const Chain = styled.section`
  display: flex;
  margin: 8px 8px 0;
  padding: 4px 3px 4px 0;
  border-radius: 4px;
  background: #404040;
`;

const ChainGap = styled.div`
  flex: none;
  display: flex;
  justify-content: center;
  width: ${(p) => p.$w || 11}px;
  padding-top: 74px;
`;

const DeviceBox = styled.article`
  flex: none;
  width: ${(p) => p.$w}px;
  height: 188px;
  border-radius: 4px;
  overflow: hidden;
  background: ${(p) => p.$bg || "#7b7b7b"};
`;

const DeviceTitle = styled.h2`
  display: flex;
  align-items: center;
  gap: 3px;
  height: 17px;
  margin: 0;
  padding: 0 3px;
  background: #989898;
  font-size: 11px;
  font-weight: 500;
  white-space: nowrap;
  span {
    flex: 1;
    display: flex;
    align-items: center;
    gap: 2px;
    padding-left: 1px;
  }
`;

const Brand = styled.em`
  font-style: normal;
  font-weight: 700;
  color: #5a5a5a;
`;

function LevelPair() {
  return <Meter h={40} level={15} mid={12} peak={9} tick={4} />;
}

function Device(props) {
  return (
    <DeviceBox $w={props.w} $bg={props.bg}>
      <DeviceTitle>
        <Circle $d={13} $bg={orange} $line="#464646" aria-label={"Toggle " + props.name} />
        {props.fold && (
          <Circle $d={13} $bg="#a8a8a8" $line="#333333" aria-label="Fold">
            <svg width="11" height="11"><path d={props.fold === "play" ? "M3 2l6 3.500L3 9z" : "M2.500 2.500h6.500L5.700 9z"} /></svg>
          </Circle>
        )}
        <span>
          {props.name}
          {props.hand && <FaHandPaper size={11} color="#3a33e0" />}
        </span>
        {props.brand && <Brand>{props.brand}</Brand>}
        <Circle $d={13} $bg="#a8a8a8" $line="#333333" aria-label="Hot-swap">
          <svg width="11" height="11" fill="none" stroke="#000" strokeWidth="1.300">
            <path d="M2 6.500Q2 3 5.500 3M9 4.500Q9 8 5.500 8" />
            <path d="M5 .800v4L7.500 3zM6 6.200v4L3.500 8z" fill="#000" stroke="none" />
          </svg>
        </Circle>
        <Circle $d={13} $bg="#a8a8a8" $line="#333333" aria-label="Save preset">
          <svg width="11" height="11"><path d="M2 2h6l1 1v6H2z" /><path d="M4 2.500h3v2H4z" fill="#a8a8a8" /></svg>
        </Circle>
      </DeviceTitle>
      {props.children}
    </DeviceBox>
  );
}

const KnobBox = styled.div`
  flex: none;
  display: flex;
  flex-direction: column;
  align-items: center;
  width: ${(p) => p.$w || 42}px;
  color: ${(p) => p.$color || "#070707"};
  line-height: 12px;
  white-space: nowrap;
`;

function arc(cx, cy, r, from, to) {
  const pt = (a) => [cx + r * Math.sin((a * Math.PI) / 180), cy - r * Math.cos((a * Math.PI) / 180)];
  const [x1, y1] = pt(from);
  const [x2, y2] = pt(to);
  return `M${x1.toFixed(2)} ${y1.toFixed(2)}A${r} ${r} 0 ${to - from > 180 ? 1 : 0} 1 ${x2.toFixed(2)} ${y2.toFixed(2)}`;
}

function Knob(props) {
  const { label, text, value = 0.5, bipolar, big, color = blue, track = ink, pointer = ink, tip, dot, w } = props;
  const r = big ? 17 : 12;
  const cy = big ? 19 : bipolar ? 19 : 12;
  const h = big ? 39 : cy + 12;
  const cx = r + 1;
  const a = -150 + 300 * value;
  const rad = (a * Math.PI) / 180;
  const start = bipolar ? Math.min(0, a) : -150;
  const end = bipolar ? Math.max(0, a) : a;
  return (
    <KnobBox $w={w} $color={props.textColor}>
      <span>{label}</span>
      <svg width={cx * 2} height={h} fill="none" strokeWidth="2" role="img" aria-label={label}>
        <path d={arc(cx, cy, r, -146, 146)} stroke={track} />
        {end > start && <path d={arc(cx, cy, r, Math.max(start, -146), Math.min(end, 146))} stroke={color} />}
        <path d={`M${cx} ${cy}L${cx + r * Math.sin(rad)} ${cy - r * Math.cos(rad)}`} stroke={pointer} />
        {bipolar && <path d={`M${cx - 4} 1h8l-4 4.500z`} fill={tip || track} />}
        {dot && <circle cx="3" cy="7" r="2.500" fill="#ff3b3b" stroke="#3a1a1a" strokeWidth="1" />}
      </svg>
      <span>{text}</span>
    </KnobBox>
  );
}

const Row = styled.div`
  display: flex;
  gap: ${(p) => p.$gap || 0}px;
  ${(p) => p.$bottom && css`align-items: flex-end;`}
  ${(p) => p.$between && css`justify-content: space-between;`}
`;

const Column = styled.div`
  flex: none;
  display: flex;
  flex-direction: column;
  align-items: ${(p) => p.$align || "center"};
  width: ${(p) => p.$w}px;
  gap: ${(p) => p.$gap || 0}px;
  padding: ${(p) => p.$pad || "0"};
`;

const Label = styled.span`
  line-height: ${(p) => p.$lh || 12}px;
  font-weight: ${(p) => (p.$bold ? 500 : 400)};
  white-space: nowrap;
`;

const Spacer = styled.i`
  flex: none;
  height: ${(p) => p.$h}px;
`;

const Divider = styled.i`
  flex: none;
  width: 1px;
  margin: ${(p) => p.$m || "5px 0"};
  background: #505050;
`;

const Screen = styled.svg`
  border-radius: 3px;
  background: #232323;
  overflow: hidden;
  font-size: 11px;
`;

function Headphones(props) {
  return (
    <svg width="10" height="10">
      <path d="M2 8.500H3.500V5.500H1.500V4.500Q1.500 1 5 1t3.500 3.500v1H6.500v3H8V5" fill="none" stroke={props.color || "#000"} strokeWidth="1.200" />
    </svg>
  );
}

/* ---------- devices ---------- */

const EqBody = styled.div`
  display: grid;
  grid-template-columns: 48px 374px 52px;
  column-gap: 2px;
  padding: 0 2px 2px;
  background: #989898;
`;

const EqSide = styled.div`
  display: flex;
  flex-direction: column;
  align-items: ${(p) => (p.$left ? "stretch" : "center")};
  gap: ${(p) => (p.$left ? 0 : 6)}px;
  height: 169px;
  padding: ${(p) => (p.$left ? "6px 3px 0" : "2px 0 0")};
  border-radius: 3px;
  background: #7b7b7b;
`;

const Bands = styled.div`
  display: grid;
  grid-template-columns: repeat(8, 45px);
  column-gap: 2px;
  margin-top: 2px;
`;

const Band = styled.div`
  display: flex;
  flex-direction: column;
  align-items: center;
  gap: 3px;
  height: 33px;
  padding-top: 2px;
  border-radius: 3px;
  background: ${(p) => (p.$current ? "transparent" : "#7b7b7b")};
  label {
    display: flex;
    align-items: center;
    gap: 7px;
  }
  input {
    appearance: none;
    width: 11px;
    height: 11px;
    border: 1px solid #464646;
    background: #8b8b8b;
  }
  input:checked {
    background: ${orange};
  }
`;

const eqSpectrum = () => {
  const pts = [[112, 134], [118, 86], [122, 100], [128, 109], [132, 98], [136, 79], [139, 105], [142, 116], [145, 112], [149, 74], [152, 86], [155, 99], [158, 94], [160, 103], [163, 125], [165, 100], [167, 110], [170, 92], [173, 99], [176, 88], [178, 104], [180, 123], [183, 80], [185, 100], [187, 119], [189, 85], [192, 108], [194, 81], [197, 112], [200, 93]];
  for (let x = 201; x < 232; x += 1.500) pts.push([x, 87 + noise(x) * 17]);
  for (let x = 232; x < 274; x += 1.500) pts.push([x, 96 + (x - 232) * 0.2 + noise(x) * 10]);
  for (let x = 274; x < 292; x += 1.500) pts.push([x, 108 - (x - 274) * 0.900 + noise(x) * 10]);
  for (let x = 292; x < 346; x += 1.500) pts.push([x, 86 + noise(x) * 11]);
  for (let x = 346; x < 360; x += 1.500) pts.push([x, 92 + (x - 346) * 1.500 + noise(x) * 6]);
  pts.push([362, 124], [365, 134]);
  return pts.map((p) => p.join(",")).join(" ");
};

function logLines(origin, decade, width, h, y = 0) {
  const lines = [];
  for (let d = -1; d < 3; d++) {
    for (let m = 1; m < 10; m++) {
      const x = origin + decade * (d + Math.log10(m));
      if (x > 20 * (decade / 111) && x < width) lines.push(<rect key={d + "-" + m} x={x} y={y} width="1" height={h} fill={m === 1 ? "#585858" : "#393939"} />);
    }
  }
  return lines;
}

const bandShapes = [
  "M0 9V6Q0 3 3 3H14",
  "M0 2h3q3 0 4 3h7M0 9h3q3 0 4-4",
  "M0 5.500h3q2-4 4-4t4 4h3M3 5.500q2 4 4 4t4-4",
  "M0 5.500h3q2-4 4-4t4 4h3M3 5.500q2 4 4 4t4-4",
  "M0 5.500h3q2-4 4-4t4 4h3M3 5.500q2 4 4 4t4-4",
  "M0 5.500h3q2-4 4-4t4 4h3M3 5.500q2 4 4 4t4-4",
  "M0 5.500h6q2-4 4-4h4M6 5.500q2 4 4 4h4",
  "M0 3h10q3 0 3 3v3",
];

function EqEight() {
  const on = [0, 2, 6];
  return (
    <Device w={482} name="EQ Eight" fold="play" bg="#989898">
      <EqBody>
        <EqSide>
          <Knob label="Freq" text="120 Hz" value={0.33} />
          <Knob label="Gain" text="0.00 dB" bipolar track="#5c5c5c" pointer="#5c5c5c" textColor="#333333" />
          <Knob label="Q" text="0.71" value={0.37} />
        </EqSide>
        <div>
          <Screen width="374" height="134">
            {logLines(112, 111, 374, 134)}
            {[13, 40, 67, 94, 120].map((y) => (
              <rect key={y} x="22" y={y} width="352" height="1" fill="#454545" />
            ))}
            <polygon points={eqSpectrum()} fill="#5a5a5a" />
            <g fill="#8c8c8c" fontWeight="500">
              {["12", "6", "0", "-6", "-12"].map((t, i) => (
                <text key={t} x="19" y={17 + i * 27} textAnchor="end">{t}</text>
              ))}
              {["100", "1k", "10k"].map((t, i) => (
                <text key={t} x={112 + i * 111} y="132" textAnchor="middle">{t}</text>
              ))}
            </g>
            <path d="M44 134C50 105 53 67 65 67H200C240 67 260 62 285 62S330 65 345 65C362 65 364 80 371 134" fill="none" stroke="#8f8f8f" strokeWidth="1.300" />
            <path d="M111 134C116 105 118 64 136 64S190 66 223 66S340 66 374 62" fill="none" stroke={orange} strokeWidth="1.400" />
            <circle cx="123" cy="81" r="6.500" fill={orange} />
            <circle cx="166" cy="64" r="5.500" fill="none" stroke={orange} strokeWidth="1.500" />
            <circle cx="318" cy="62" r="5.500" fill="none" stroke={orange} strokeWidth="1.500" />
            <g textAnchor="middle" fontSize="9">
              <text x="123" y="84">1</text>
              <text x="166" y="67" fill={orange}>3</text>
              <text x="318" y="65" fill={orange}>7</text>
            </g>
          </Screen>
          <Bands>
            {bandShapes.map((d, i) => (
              <Band key={i} $current={i === 0}>
                <SelectWrap $w={37} $bg={on.includes(i) ? "#bbbbbb" : "#8b8b8b"}>
                  <svg width="20" height="11" viewBox="-2 0 20 11">
                    <path d={d} fill="none" stroke="#000" />
                    {i === 0 && <text x="6" y="10" fontSize="7" fontWeight="700">x4</text>}
                  </svg>
                  <select aria-label={"Filter type " + (i + 1)} />
                </SelectWrap>
                <label>
                  <input type="checkbox" defaultChecked={on.includes(i)} />
                  {i + 1}
                </label>
              </Band>
            ))}
          </Bands>
        </div>
        <EqSide $left>
          <Row $between>
            <Btn $w={21} aria-label="Audition"><Headphones color="#333" /></Btn>
            <Btn $w={21} $bg={orange} aria-label="Analyzer">
              <svg width="14" height="9"><path d="M1 9V6M3 9V3M5 9V5M7 9V1M9 9V4M11 9V2M13 9V6" stroke="#333" /></svg>
            </Btn>
          </Row>
          <Label $lh={15} $bold>Mode</Label>
          <Select value="M/S" label="Mode" />
          <Label $lh={15} $bold>Edit</Label>
          <Btn $w={46} $bg="#bbbbbb" $color="#5c5c5c">S</Btn>
          <Label $lh={15} $bold>Adapt. Q</Label>
          <Btn $w={46} $bg={orange}>On</Btn>
          <Label $lh={15} $bold>Scale</Label>
          <ValueInput $w={46} $fill={75} aria-label="Scale" defaultValue="100 %" />
          <Label $lh={15} $bold>Gain</Label>
          <ValueInput $w={46} $fill={50} aria-label="Output gain" defaultValue="0.00 dB" />
        </EqSide>
      </EqBody>
    </Device>
  );
}

const VuPanel = styled.div`
  width: 140px;
  height: 156px;
  margin-top: 7px;
  border-radius: 3px;
  background: #6b6b6b;
  overflow: hidden;
`;

const KnobPair = styled.div`
  display: flex;
  justify-content: space-between;
  padding: 9px 12px 0 11px;
`;

const HLine = styled.i`
  width: 45px;
  height: 1px;
  margin: 8px 0 13px;
  background: #505050;
`;

const ClipLine = styled.div`
  display: flex;
  align-items: center;
  gap: 4px;
  margin-bottom: 2px;
  i {
    width: 6px;
    height: 6px;
    border-radius: 50%;
    background: #505050;
  }
`;

function StepDial(props) {
  const a = -150 + 300 * props.value;
  const rad = (a * Math.PI) / 180;
  return (
    <>
      <Label>{props.label}</Label>
      <svg width="72" height="42" fill="none" strokeWidth="2">
        <g transform="translate(37 24)">
          <path d={arc(0, 0, 11, -110, 110)} stroke={ink} />
          <path d={arc(0, 0, 11, -110, a)} stroke={blue} />
          <path d={`M0 0L${12 * Math.sin(rad)} ${-12 * Math.cos(rad)}`} stroke={ink} />
          {props.marks.map(([t, x, y]) => {
            const len = Math.hypot(x, y);
            return (
              <g key={t}>
                <path d={`M${(x / len) * 12.500} ${(y / len) * 12.500}L${(x / len) * 15} ${(y / len) * 15}`} stroke={ink} strokeWidth="1" />
                <text x={x} y={y + 3} textAnchor="middle" fontSize="9" fill="#070707">{t}</text>
              </g>
            );
          })}
        </g>
      </svg>
    </>
  );
}

function GlueCompressor() {
  return (
    <Device w={278} name="Glue Compressor" fold="down" brand="cytomic">
      <Row>
        <Column $w={75} $pad="6px 0 0">
          <StepDial label="Attack" value={0.63} marks={[[".01", -22, 10], [".1", -21, -4], [".3", -13, -18], ["1", 0, -20], ["3", 13, -18], ["10", 22, -4], ["30", 21, 10]]} />
          <StepDial label="Release" value={0.37} marks={[[".1", -20, 10], [".2", -21, -4], [".4", -14, -16], [".6", 0, -20], [".8", 14, -16], ["1.2", 23, -4], ["A", 19, 10]]} />
          <StepDial label="Ratio" value={0.5} marks={[["2", -19, 10], ["4", 0, -20], ["10", 21, 10]]} />
        </Column>
        <VuPanel>
          <svg width="140" height="78" textAnchor="middle" fill="#9a9a9a" fontSize="10">
            <rect width="140" height="78" fill="#262626" />
            <text x="19" y="43">0</text>
            <text x="42" y="25">5</text>
            <text x="70" y="19">10</text>
            <text x="98" y="25">15</text>
            <text x="123" y="43">20</text>
            <path d="M22 46l6 6M43.500 29l4 8M70 23v9M96.500 29l-4 8M118 45l-6.500 6" stroke="#505050" strokeWidth="2" />
            <path d="M23 43L61.500 78" stroke={blue} strokeWidth="2" />
          </svg>
          <KnobPair>
            <Knob big label="Threshold" text="-13.7 dB" value={0.66} w={58} />
            <Knob big label="Makeup" text="1.59 dB" value={0.08} w={58} />
          </KnobPair>
        </VuPanel>
        <Column $w={63} $pad="5px 0 0">
          <ClipLine><i /> Clip</ClipLine>
          <Btn $w={37}>Soft</Btn>
          <HLine />
          <Knob label="Range" text="70.0 dB" value={1} />
          <Spacer $h={13} />
          <Knob label="Dry/Wet" text="100 %" value={1} />
        </Column>
      </Row>
    </Device>
  );
}

function Saturator() {
  return (
    <Device w={226} name="Saturator" fold="down">
      <Row>
        <Column $w={176} $align="flex-start" $pad="5px 0 0 3px">
          <Row $gap={5}>
            <Column $w={43} $pad="1px 0 0">
              <Knob label="Drive" text="0.00 dB" bipolar />
              <Spacer $h={8} />
              <Btn $w={41}>DC</Btn>
              <Spacer $h={6} />
              <Btn $w={41} $bg={orange}>Color</Btn>
            </Column>
            <Column $w={116} $gap={6}>
              <Screen width="116" height="77">
                <path d="M7.500 7.500h84v62h-84zM49.500 7.500v62M7.500 38.500h84M99.500 7.500h4v62h-4zM105.500 7.500h4v62h-4z" fill="none" stroke="#505050" />
                <path d="M8 66H22C44 66 54 11 76 11H91" fill="none" stroke={blue} strokeWidth="1.600" />
                <path d="M99 53h4.500v16H99zM105.500 53h4.500v16h-4.500zM99 49.500h4.500v1H99zM105.500 50.500h4.500v1h-4.500z" fill="#ff9b2e" />
                <path d="M99 44.500h11" stroke="#8a8a8a" />
              </Screen>
              <Select w={114} value="Soft Sine" label="Curve" />
            </Column>
          </Row>
          <Spacer $h={10} />
          <Row $bottom>
            <Knob w={43} label="Base" text="0.00" bipolar />
            <Knob w={43} label="Freq" text="1.00 kHz" value={0.54} />
            <Knob w={43} label="Width" text="30 %" value={0.29} />
            <Knob w={43} label="Depth" text="0.00" bipolar />
          </Row>
        </Column>
        <Divider $m="5px 0 3px" />
        <Column $w={47} $pad="7px 0 0">
          <Label $bold>Output</Label>
          <Spacer $h={8} />
          <Label>Soft Clip</Label>
          <Btn $w={23}>Off</Btn>
          <Spacer $h={11} />
          <Knob label="Output" text="-3.00 dB" value={0.9} />
          <Spacer $h={5} />
          <Knob label="Dry/Wet" text="100 %" value={1} />
        </Column>
      </Row>
    </Device>
  );
}

const channelSpectrum = () => {
  const pts = [[0, 82], [0, 47], [4, 38], [9, 32], [13, 33], [17, 38], [22, 36], [27, 28], [32, 22], [36, 22], [40, 31], [45, 36], [50, 40], [54, 36], [58, 30], [62, 42], [66, 45], [69, 36], [73, 41], [78, 50], [82, 52], [86, 41], [90, 50], [94, 37], [97, 30]];
  for (let x = 99; x < 140; x += 1.500) pts.push([x, 40 + noise(x) * 16]);
  for (let x = 140; x < 165; x += 1.500) pts.push([x, 44 + (x - 140) * 0.4 + noise(x) * 8]);
  for (let x = 165; x < 222; x += 1.500) pts.push([x, 50 + noise(x) * 8]);
  for (let x = 222; x < 233; x += 1.500) pts.push([x, 54 + (x - 222) * 1.200 + noise(x) * 4]);
  pts.push([236, 76], [237, 82]);
  return pts.map((p) => p.join(",")).join(" ");
};

const ChannelKnobs = styled.div`
  position: relative;
  display: flex;
  padding: 6px 0 0 11px;
  &::before {
    content: "";
    position: absolute;
    top: 0;
    left: 83px;
    border: 4px solid transparent;
    border-top-color: #1e1e1e;
    border-bottom: 0;
  }
`;

function ChannelEq() {
  return (
    <Device w={247} name="Channel EQ">
      <Column $w={247} $pad="4px 0 0">
        <Screen width="239" height="103">
          {[56, 136, 215].map((x) => (
            <rect key={x} x={x} width="1" height="70" fill="#5a5a5a" />
          ))}
          <path d="M22 8.500h217M22 40.500h217M22 72.500h22M66 72.500h60M145 72.500h57M224 72.500h15" stroke="#454545" />
          <polygon points={channelSpectrum()} fill="#5a5a5a" />
          <path d="M0 38C60 36 80 41 110 41S180 36 220 36L239 37.500" fill="none" stroke={blue} strokeWidth="1.600" />
          <g fill="#a0a0a0" fontWeight="500">
            <text x="19" y="13" textAnchor="end">12</text>
            <text x="19" y="45" textAnchor="end">0</text>
            <text x="19" y="77" textAnchor="end">-12</text>
            <text x="55" y="80" textAnchor="middle">100</text>
            <text x="135" y="80" textAnchor="middle">1k</text>
            <text x="214" y="80" textAnchor="middle">10k</text>
          </g>
          <rect y="82" width="239" height="21" fill="#1e1e1e" />
          <rect y="81" width="239" height="1" fill="#3c3c3c" />
          <rect x="4.500" y="86.500" width="20" height="12" fill="none" stroke={orange} />
          <path d="M7 96Q9 90 21 90" fill="none" stroke={orange} />
          <text x="78" y="96" textAnchor="middle" fill={orange} fontWeight="500">300 Hz</text>
        </Screen>
      </Column>
      <ChannelKnobs>
        <Knob w={50} label="Low" text="1.0 dB" bipolar value={0.53} tip={blue} />
        <Knob w={50} label="Mid" text="-0.4 dB" bipolar value={0.49} tip={blue} />
        <Knob w={50} label="High" text="1.5 dB" bipolar value={0.54} tip={blue} />
        <Divider $m="0 0 0 12px" />
        <Knob w={73} label="Output" text="-0.5 dB" bipolar value={0.49} tip={blue} />
      </ChannelKnobs>
    </Device>
  );
}

const FieldRow = styled.label`
  display: flex;
  align-items: center;
  justify-content: space-between;
  height: 13px;
  margin-top: 4px;
`;

const OverBody = styled.div`
  padding: 4px 5px 0;
  > ${Row} {
    margin-top: 3px;
  }
`;

function Overdrive() {
  return (
    <Device w={110} name="Overdrive">
      <OverBody>
        <Screen width="100" height="61">
          {logLines(11, 39, 100, 61)}
          <path d="M0 30.500h100M0 40.500h100M0 50.500h100" stroke="#393939" />
          <path d="M0 20.500h100" stroke="#585858" />
          <path d="M0 60.500H40C75 60.500 70 22 89 21.500C97 21.500 98 32 100 54" fill="none" stroke={blue} strokeWidth="1.600" />
          <circle cx="93" cy="34" r="5.500" fill="none" stroke="#e8953a" strokeWidth="1.800" />
        </Screen>
        <Row $between>
          <ValueInput $w={48} $fill={100} aria-label="Filter frequency" defaultValue="20.0 kHz" />
          <ValueInput $w={48} $fill={46} aria-label="Bandwidth" defaultValue="4.00" />
        </Row>
        <Row $between>
          <Knob w={48} label="Drive" text="50 %" value={0.5} />
          <Knob w={48} label="Tone" text="50 %" value={0.5} />
        </Row>
        <FieldRow>
          Dynamics
          <ValueInput $w={48} $fill={50} defaultValue="50 %" />
        </FieldRow>
        <FieldRow>
          Dry/Wet
          <ValueInput $w={48} $fill={4} defaultValue="4 %" />
        </FieldRow>
      </OverBody>
    </Device>
  );
}

const SplitDivider = styled(Divider)`
  position: relative;
  &::after {
    content: "";
    position: absolute;
    top: 75px;
    left: -2px;
    border: 4px solid transparent;
    border-left-color: #505050;
    border-right: 0;
    outline: 2px solid #7b7b7b;
  }
`;

function Utility() {
  return (
    <Device w={139} name="Utility">
      <Row>
        <Column $w={69} $pad="4px 0 0">
          <Label $bold>Input</Label>
          <Spacer $h={3} />
          <Row $gap={4}>
            <Btn $w={26}>Ø L</Btn>
            <Btn $w={26}>Ø R</Btn>
          </Row>
          <Spacer $h={3} />
          <Select w={56} value="Stereo" label="Channel mode" />
          <Spacer $h={6} />
          <Knob label="Width" text="100 %" bipolar />
          <Spacer $h={5} />
          <Btn $w={56}>Mono</Btn>
          <Spacer $h={9} />
          <Btn $w={56}>Bass Mono</Btn>
          <Spacer $h={3} />
          <Row $gap={4}>
            <ValueInput $w={40} $fill={36} $color="#bbbbbb" $base="#8b8b8b" aria-label="Bass mono frequency" defaultValue="120 Hz" />
            <Circle $d={13} $line="#333333" $bg="#a8a8a8" aria-label="Audition bass"><Headphones /></Circle>
          </Row>
        </Column>
        <SplitDivider $m="4px 0 5px" />
        <Column $w={69} $pad="4px 0 0">
          <Label $bold>Output</Label>
          <Spacer $h={8} />
          <Knob label="Gain" text="0.00 dB" bipolar dot />
          <Spacer $h={9} />
          <Knob label="Balance" text="C" bipolar />
          <Spacer $h={9} />
          <Row $gap={3}>
            <Btn $w={31}>Mute</Btn>
            <Btn $w={19}>DC</Btn>
          </Row>
        </Column>
      </Row>
    </Device>
  );
}

const LimiterMeter = styled.div`
  display: flex;
  gap: 5px;
  padding: 7px 0 0 18px;
  line-height: 14px;
  text-align: center;
  i {
    width: 8px;
    height: 100px;
    margin-top: 6px;
    background: #232323;
    border-top: ${(p) => (p.$hot ? "1px solid " + orange : 0)};
  }
  span {
    display: block;
    width: 18px;
  }
`;

function Limiter(props) {
  return (
    <Device w={115} name="Limiter" hand={props.hot}>
      <Row>
        <Column $w={61} $align="flex-start" $pad="6px 0 0 7px">
          <Knob w={48} label="Gain" text={props.gain} bipolar value={props.value} tip={props.hot && blue} />
          <Spacer $h={4} />
          <Label>Lookahead</Label>
          <Select w={52} value="3 ms" label="Lookahead" />
          <Spacer $h={11} />
          <Knob w={48} label="Release" text="300 ms" value={0.82} color="#b9b9b9" track="#5c5c5c" pointer="#5c5c5c" />
          <Spacer $h={2} />
          <Btn $w={48} $bg={orange}>Auto</Btn>
        </Column>
        <Column $w={54} $align="flex-start" $pad="6px 0 0">
          <Label>Ceiling</Label>
          <ValueInput $w={47} aria-label="Ceiling" defaultValue={props.ceiling} />
          <Spacer $h={4} />
          <Btn $w={47} $bg={orange}>Stereo</Btn>
          <LimiterMeter $hot={props.hot}>
            <i />
            <div>
              {["0", "-6", "-12", "-18", "-24", "-30", "-36", "-42"].map((t) => (
                <span key={t}>{t}</span>
              ))}
            </div>
          </LimiterMeter>
        </Column>
      </Row>
    </Device>
  );
}

const DropBar = styled.i`
  flex: none;
  width: 2px;
  margin-right: 3px;
  background: #b9e9ff;
`;

const DropArea = styled.div`
  flex: 1;
  display: flex;
  align-items: center;
  justify-content: center;
  padding-left: 18px;
  background: #7b7b7b;
  line-height: 15px;
  text-align: center;
  white-space: nowrap;
`;

function DeviceChain() {
  const devices = [
    <EqEight />,
    <GlueCompressor />,
    <Saturator />,
    <ChannelEq />,
    <Overdrive />,
    <Utility />,
    <Limiter gain="0.00 dB" ceiling="-7.12 dB" />,
    <Limiter gain="9.70 dB" ceiling="-0.30 dB" value={0.7} hot />,
  ];
  return (
    <Chain>
      {devices.map((device, i) => (
        <React.Fragment key={i}>
          <ChainGap $w={i ? 11 : 15}><LevelPair /></ChainGap>
          {device}
        </React.Fragment>
      ))}
      <ChainGap><LevelPair /></ChainGap>
      <DropBar />
      <DropArea>
        Drop Audio
        <br />
        Effects Here
      </DropArea>
    </Chain>
  );
}

/* ---------- status bar ---------- */

const Footer = styled.footer`
  display: grid;
  grid-template-columns: 19px minmax(0, 1fr) 206px 207px 19px;
  column-gap: 8px;
  height: 38px;
  padding: 0 8px;
  > button {
    margin-top: 8px;
  }
`;

const StatusBox = styled.div`
  height: 22px;
  margin-top: 8px;
  border: 3px solid #505050;
  border-radius: 3px;
  background: #7b7b7b;
`;

const MasterTab = styled.div`
  display: flex;
  align-items: center;
  justify-content: space-between;
  height: 30px;
  padding: 8px 5px 0 5px;
  border-radius: 0 0 4px 4px;
  background: #404040;
`;

function ChainMap() {
  const boxes = [[3, 36], [42, 23], [67, 20], [89, 22], [113, 10], [125, 10], [137, 9], [149, 8]];
  return (
    <svg width="159" height="20">
      <rect x="1" y="1" width="157" height="18" fill="#4a4a4a" stroke="#000" strokeWidth="2" />
      {boxes.map(([x, w], i) => (
        <g key={x}>
          <rect x={x} y="2" width={w} height="15" fill="#7b7b7b" />
          <rect x={x} y="2" width={w} height="2" fill="#a3a3a3" />
          {i < 5 && <rect x={x + (i === 0 ? 2 : w / 4)} y="4" width={i === 0 ? 31 : w / 1.700} height={i === 0 ? 11 : 7} fill="#262626" />}
          <rect x={x + w - 3} y="7" width="2" height="1" fill={orange} />
          <path d={`M${x + 1} 13h${w - 2}`} stroke="#4c4c4c" strokeDasharray="2 2" />
          <rect x={x + w - 3} y="11" width="2" height="1" fill={blue} />
        </g>
      ))}
      <path d="M11 9.500h24" stroke="#b87f37" strokeDasharray="3 2" />
      <path d="M69 12.500h4M139 13.500h4M151 13.500h4" stroke={orange} />
    </svg>
  );
}

function StatusBar() {
  return (
    <Footer>
      <Circle $d={19} $bg="#4f4f4f" aria-label="Info view">
        <svg width="19" height="19"><path d="M5 4.500l10.500 5-10.500 5z" fill="#747474" /></svg>
      </Circle>
      <StatusBox />
      <StatusBox />
      <MasterTab>
        Master
        <ChainMap />
      </MasterTab>
      <Circle $d={19} $bg="#4f4f4f" aria-label="Detail view">
        <svg width="19" height="19"><path d="M4.500 14.500h10l-5-10z" fill="#747474" /></svg>
      </Circle>
    </Footer>
  );
}

export default function App() {
  return (
    <Page>
      <GlobalStyle />
      <Toolbar />
      <Arrangement />
      <DeviceChain />
      <StatusBar />
    </Page>
  );
}
